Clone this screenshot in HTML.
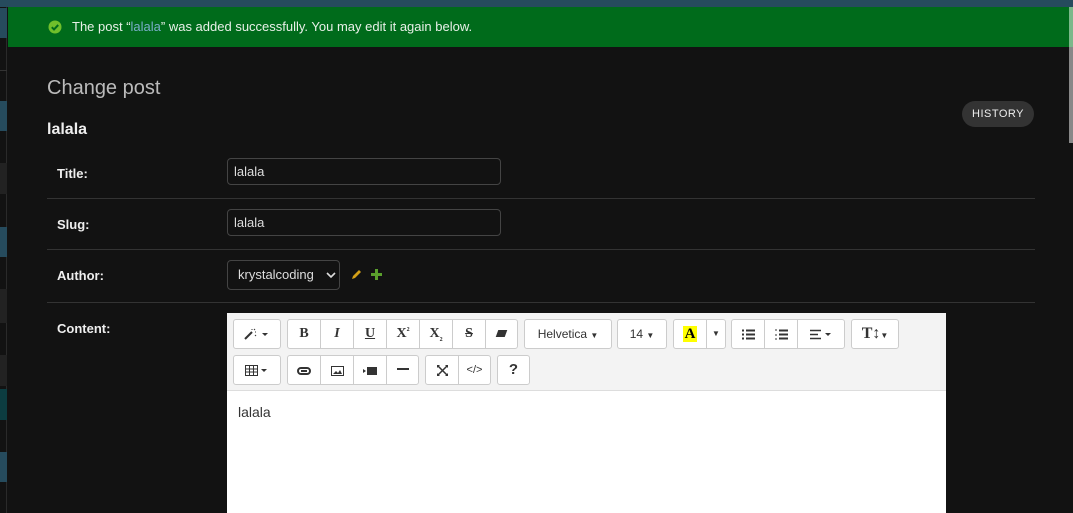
<!DOCTYPE html>
<html><head><meta charset="utf-8"><style>
*{box-sizing:border-box;margin:0;padding:0}
body{width:1073px;height:513px;overflow:hidden;background:#121212;font-family:"Liberation Sans",sans-serif;position:relative;color:#eee}
.a{position:absolute}
.top{left:0;top:0;width:1073px;height:7px;background:#264b5d}
.side{left:0;top:7px;width:7px;height:506px;background:#121212;border-right:1px solid #2a2a2a}
.msg{left:8px;top:7px;width:1065px;height:40px;background:#006b1b;font-size:13px;color:#e8f0e8;line-height:40px;padding-left:64px}
.msg a{color:#79aec8}
.lbl{left:57px;font-size:13px;font-weight:bold;color:#eee}
.sep{left:47px;width:988px;height:1px;background:#333}
.inp{left:227px;width:274px;height:27px;border:1px solid #444;border-radius:4px;font-size:13px;line-height:25px;padding-left:6px;color:#ddd;background:#121212}
.ed{left:227px;top:313px;width:719px;height:200px;background:#fff}
.tb{left:227px;top:313px;width:719px;height:78px;background:#f3f3f3;border-bottom:1px solid #ddd}
.b{position:absolute;height:30px;border:1px solid #ccc;background:#fff;color:#333;font-size:14px;text-align:center;line-height:28px;font-family:"Liberation Serif",serif;font-weight:bold;overflow:hidden}
.b svg{vertical-align:middle}
.s{font-family:"Liberation Sans",sans-serif;font-weight:normal;font-size:12px}
.r{border-radius:3px}
.sp{position:relative;font-size:6px;top:-6px}
.sb{position:relative;font-size:6px;top:4px}
</style></head><body>
<div class="a top"></div>
<div class="a side"></div>
<div class="a" style="left:0;top:8px;width:7px;height:30px;background:#264b5d"></div>
<div class="a" style="left:0;top:70px;width:7px;height:1px;background:#333"></div>
<div class="a" style="left:0;top:101px;width:7px;height:30px;background:#264b5d"></div>
<div class="a" style="left:0;top:163px;width:7px;height:31px;background:#222"></div>
<div class="a" style="left:0;top:227px;width:7px;height:30px;background:#264b5d"></div>
<div class="a" style="left:0;top:289px;width:7px;height:34px;background:#222"></div>
<div class="a" style="left:0;top:355px;width:7px;height:31px;background:#222"></div>
<div class="a" style="left:0;top:389px;width:7px;height:31px;background:#0c3c40"></div>
<div class="a" style="left:0;top:452px;width:7px;height:30px;background:#264b5d"></div>
<div class="a msg">The post “<a>lalala</a>” was added successfully. You may edit it again below.</div>
<svg class="a" style="left:48px;top:20px" width="14" height="14" viewBox="0 0 14 14"><circle cx="7" cy="7" r="6.5" fill="#70bf2b"/><path d="M3.8 7.2l2.2 2.2 4.2-4.4" stroke="#006b1b" stroke-width="2" fill="none"/></svg>
<div class="a" style="left:1069px;top:47px;width:4px;height:96px;background:#888"></div>
<div class="a" style="left:1069px;top:7px;width:4px;height:40px;background:#7bb88a"></div>
<div class="a" style="left:47px;top:77px;font-size:20px;color:#bbb">Change post</div>
<div class="a" style="left:47px;top:121px;font-size:16px;font-weight:bold;color:#eee">lalala</div>
<div class="a" style="left:962px;top:101px;width:72px;height:26px;border-radius:13px;background:#333;font-size:11px;color:#eee;text-align:center;line-height:26px;letter-spacing:.5px">HISTORY</div>
<div class="a lbl" style="top:166px">Title:</div>
<div class="a inp" style="top:158px">lalala</div>
<div class="a sep" style="top:198px"></div>
<div class="a lbl" style="top:217px">Slug:</div>
<div class="a inp" style="top:209px">lalala</div>
<div class="a sep" style="top:249px"></div>
<div class="a lbl" style="top:268px">Author:</div>
<div class="a inp" style="top:260px;width:113px;height:30px;line-height:28px;padding-left:10px">krystalcoding</div>
<svg class="a" style="left:326px;top:271px" width="10" height="8" viewBox="0 0 10 8"><path d="M1 2l4 4 4-4" stroke="#ddd" stroke-width="1.6" fill="none"/></svg>
<svg class="a" style="left:350px;top:268px" width="13" height="13" viewBox="0 0 13 13"><path d="M2 11l1-3 6-6 2 2-6 6z" fill="#d4a017"/></svg>
<svg class="a" style="left:371px;top:269px" width="11" height="11" viewBox="0 0 11 11"><path d="M4 0h3v4h4v3H7v4H4V7H0V4h4z" fill="#5aa02c"/></svg>
<div class="a sep" style="top:302px"></div>
<div class="a lbl" style="top:321px">Content:</div>
<div class="a ed"></div>
<div class="a tb"></div>
<div class="b r" style="left:233px;top:319px;width:48px"><svg width="26" height="12" viewBox="0 0 26 12"><path d="M1 11l7-7" stroke="#333" stroke-width="2"/><path d="M8 1v1M11 4h1M10 1l1 1M11 7l1 1" stroke="#333"/><path d="M18 5h6l-3 3z" fill="#333"/></svg></div>
<div class="b" style="left:287px;top:319px;width:34px;border-radius:3px 0 0 3px">B</div>
<div class="b" style="left:320px;top:319px;width:34px;font-style:italic">I</div>
<div class="b" style="left:353px;top:319px;width:34px;text-decoration:underline">U</div>
<div class="b" style="left:386px;top:319px;width:34px">X<span class="sp">2</span></div>
<div class="b" style="left:419px;top:319px;width:34px">X<span class="sb">2</span></div>
<div class="b" style="left:452px;top:319px;width:34px;text-decoration:line-through">S</div>
<div class="b" style="left:485px;top:319px;width:33px;border-radius:0 3px 3px 0"><span style="display:inline-block;width:9px;height:7px;background:#333;transform:skewX(-20deg)"></span></div>
<div class="b s r" style="left:524px;top:319px;width:88px">Helvetica <span style="font-size:8px">▼</span></div>
<div class="b s r" style="left:617px;top:319px;width:50px">14 <span style="font-size:8px">▼</span></div>
<div class="b" style="left:673px;top:319px;width:34px;border-radius:3px 0 0 3px;font-size:15px"><span style="background:#ff0;padding:0 2px;color:#000">A</span></div>
<div class="b s" style="left:706px;top:319px;width:20px;border-radius:0 3px 3px 0;font-size:8px">▼</div>
<div class="b s" style="left:731px;top:319px;width:34px;border-radius:3px 0 0 3px"><svg width="13" height="11" viewBox="0 0 13 11"><path d="M0 1.5h2M4 1.5h9M0 5.5h2M4 5.5h9M0 9.5h2M4 9.5h9" stroke="#333" stroke-width="2"/></svg></div>
<div class="b s" style="left:764px;top:319px;width:34px"><svg width="13" height="11" viewBox="0 0 13 11"><path d="M4 1.5h9M4 5.5h9M4 9.5h9" stroke="#333" stroke-width="2"/><path d="M0 1h2M0 6h2M0 10h2" stroke="#333" stroke-width="1"/></svg></div>
<div class="b s" style="left:797px;top:319px;width:48px;border-radius:0 3px 3px 0"><svg width="22" height="11" viewBox="0 0 22 11"><path d="M0 1.5h11M0 5.5h8M0 9.5h11" stroke="#333" stroke-width="1.6"/><path d="M15 4h6l-3 3z" fill="#333"/></svg></div>
<div class="b r" style="left:851px;top:319px;width:48px;font-size:16px">T↕<span style="font-size:8px">▼</span></div>
<div class="b s r" style="left:233px;top:355px;width:48px"><svg width="24" height="11" viewBox="0 0 24 11"><path d="M.5.5h12v10H.5zM.5 4h12M.5 7h12M4.5.5v10M8.5.5v10" stroke="#333" fill="none"/><path d="M16 4h6l-3 3z" fill="#333"/></svg></div>
<div class="b s" style="left:287px;top:355px;width:34px;border-radius:3px 0 0 3px"><svg width="14" height="8" viewBox="0 0 14 8"><rect x="1" y="1" width="12" height="6" rx="3" stroke="#333" stroke-width="2" fill="none"/><path d="M4 4h6" stroke="#333" stroke-width="2"/></svg></div>
<div class="b s" style="left:320px;top:355px;width:34px"><svg width="13" height="10" viewBox="0 0 13 10"><rect x=".5" y=".5" width="12" height="9" stroke="#333" fill="none"/><path d="M2 8l3-3 2 2 2-3 2 4z" fill="#333"/></svg></div>
<div class="b s" style="left:353px;top:355px;width:34px"><svg width="14" height="8" viewBox="0 0 14 8"><path d="M0 2l3 2-3 2z" fill="#333"/><rect x="4" y="0" width="10" height="8" fill="#333"/></svg></div>
<div class="b" style="left:386px;top:355px;width:33px;border-radius:0 3px 3px 0"><svg width="12" height="3"><rect width="12" height="2" fill="#333"/></svg></div>
<div class="b s" style="left:425px;top:355px;width:34px;border-radius:3px 0 0 3px"><svg width="11" height="11" viewBox="0 0 11 11"><path d="M1 1l9 9M10 1L1 10" stroke="#333" stroke-width="1.5"/><path d="M0 0h3L0 3zM11 0H8l3 3zM0 11h3L0 8zM11 11H8l3-3z" fill="#333"/></svg></div>
<div class="b s" style="left:458px;top:355px;width:33px;border-radius:0 3px 3px 0;font-size:11px">&lt;/&gt;</div>
<div class="b s r" style="left:497px;top:355px;width:33px;font-weight:bold;font-size:15px">?</div>
<div class="a" style="left:238px;top:404px;font-size:14px;color:#333">lalala</div>
</body></html>
